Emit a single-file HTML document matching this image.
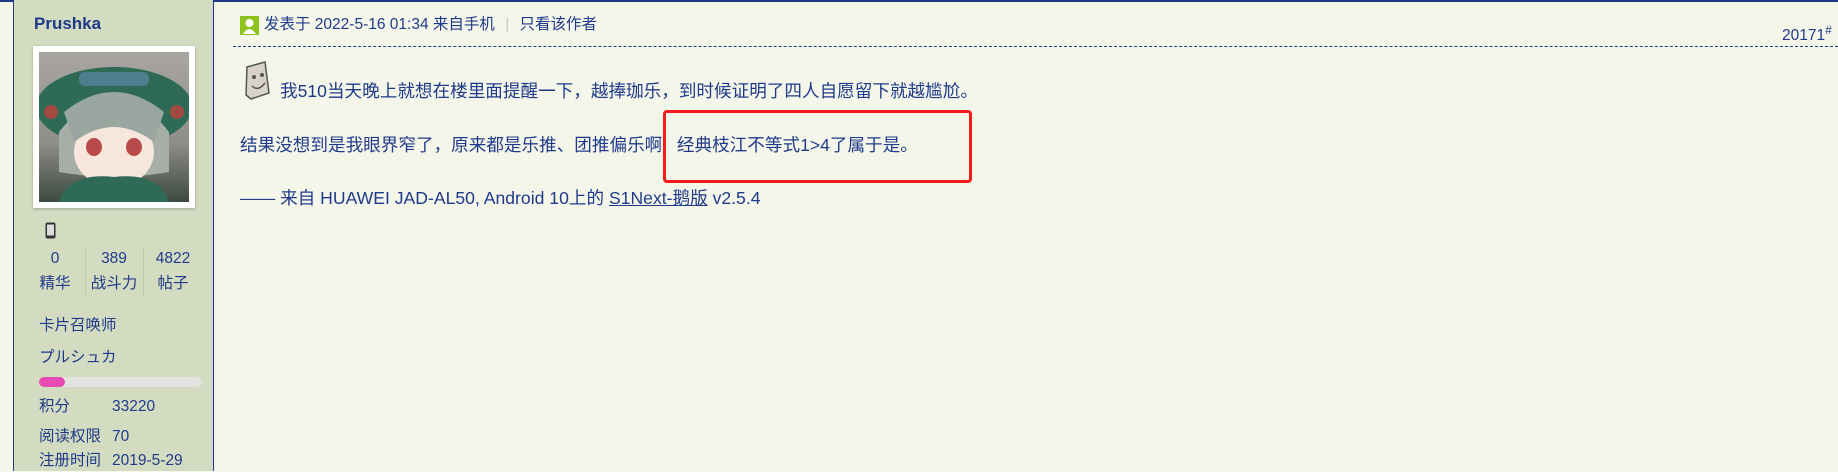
<!DOCTYPE html>
<html><head><meta charset="utf-8"><style>
*{margin:0;padding:0;box-sizing:border-box}
body{width:1838px;height:471px;overflow:hidden;background:#f5f6ea;font-family:"Liberation Sans","Noto Sans CJK SC",sans-serif;color:#1f3a8a;position:relative}
.top{position:absolute;left:0;top:0;width:1838px;height:2px;background:#1c3a86}
.side{position:absolute;left:13px;top:0;width:201px;height:471px;background:#d3dbc1;border-left:1px solid #1c3a86;border-right:1px solid #1c3a86}
.a{position:absolute;white-space:nowrap;line-height:22px}
.av{position:absolute;left:33px;top:46px;width:162px;height:162px;background:#fff;box-shadow:0 1px 3px rgba(0,0,0,.25)}
.avi{position:absolute;left:6px;top:6px;width:150px;height:150px;background:linear-gradient(#a9a6a2,#8f8e88 60%,#3d4a40);overflow:hidden}
.t{font-size:15.5px}
.stat{font-size:15.5px;text-align:center;width:56px}
</style></head><body>
<div class="top"></div>
<div class="side"></div>
<div class="a" style="left:34px;top:13px;font-size:17px;font-weight:bold;color:#1c3a86">Prushka</div>
<div class="av"><div class="avi">
<svg width="150" height="150" viewBox="0 0 150 150">
<ellipse cx="75" cy="55" rx="78" ry="40" fill="#2e6a56"/>
<rect x="40" y="20" width="70" height="14" rx="6" fill="#4f7f8e"/>
<path d="M20 80 Q75 10 130 80 L130 120 Q75 130 20 120Z" fill="#a7aea8"/>
<ellipse cx="75" cy="100" rx="40" ry="35" fill="#f6e6dc"/>
<path d="M25 60 Q75 20 125 60 L115 90 Q75 60 35 90Z" fill="#9aa6a0"/>
<ellipse cx="55" cy="95" rx="8" ry="9" fill="#b94a4a"/>
<ellipse cx="95" cy="95" rx="8" ry="9" fill="#b94a4a"/>
<path d="M20 150 Q30 120 75 125 Q120 120 130 150Z" fill="#2e6a56"/>
<circle cx="12" cy="60" r="7" fill="#a34a40"/><circle cx="138" cy="60" r="7" fill="#a34a40"/>
</svg></div></div>
<svg class="a" style="left:45px;top:222px" width="11" height="17" viewBox="0 0 11 17"><rect x=".5" y=".5" width="10" height="16" rx="2" fill="#333"/><rect x="2" y="2.5" width="7" height="11" fill="#ddd"/></svg>
<div class="a" style="left:85px;top:248px;width:1px;height:48px;background:#bfc8ad"></div>
<div class="a" style="left:143px;top:248px;width:1px;height:48px;background:#bfc8ad"></div>
<div class="a stat" style="left:27px;top:248px">0</div>
<div class="a stat" style="left:86px;top:248px">389</div>
<div class="a stat" style="left:145px;top:248px">4822</div>
<div class="a stat" style="left:27px;top:273px">精华</div>
<div class="a stat" style="left:86px;top:273px">战斗力</div>
<div class="a stat" style="left:145px;top:273px">帖子</div>
<div class="a t" style="left:39px;top:315px">卡片召唤师</div>
<div class="a t" style="left:39px;top:347px">プルシュカ</div>
<div class="a" style="left:39px;top:377px;width:163px;height:10px;border-radius:5px;background:#e2e2de"></div>
<div class="a" style="left:39px;top:377px;width:26px;height:10px;border-radius:5px;background:#e84cb4"></div>
<div class="a t" style="left:39px;top:396px">积分</div>
<div class="a t" style="left:112px;top:396px">33220</div>
<div class="a t" style="left:39px;top:426px">阅读权限</div>
<div class="a t" style="left:112px;top:426px">70</div>
<div class="a t" style="left:39px;top:450px">注册时间</div>
<div class="a t" style="left:112px;top:450px">2019-5-29</div>

<svg class="a" style="left:240px;top:16px" width="19" height="19" viewBox="0 0 19 19"><rect width="19" height="19" fill="#8dc21f"/><circle cx="9.5" cy="7" r="4" fill="#fff"/><path d="M3 18 Q9.5 8 16 18Z" fill="#fff"/></svg>
<div class="a" style="left:264px;top:14px;font-size:15.5px">发表于 2022-5-16 01:34 来自手机 <span style="color:#c8c8c8;margin:0 6px">|</span> 只看该作者</div>
<div class="a" style="left:1782px;top:19px;font-size:15.5px">20171<sup style="font-size:12px">#</sup></div>
<div class="a" style="left:233px;top:46px;width:1605px;border-top:1px dashed #1c3a86"></div>
<svg class="a" style="left:243px;top:61px" width="28" height="40" viewBox="0 0 28 40"><path d="M4 6 L22 1 L26 32 L8 38 L3 34Z" fill="#d8d2c8" stroke="#555" stroke-width="1.5"/><circle cx="11" cy="16" r="2" fill="#555"/><circle cx="19" cy="14" r="2" fill="#555"/><path d="M9 25 Q15 31 22 22" stroke="#555" fill="none" stroke-width="1.5"/></svg>
<div class="a" style="left:280px;top:80px;font-size:17.6px">我510当天晚上就想在楼里面提醒一下，越捧珈乐，到时候证明了四人自愿留下就越尴尬。</div>
<div class="a" style="left:240px;top:134px;font-size:17.6px">结果没想到是我眼界窄了，原来都是乐推、团推偏乐啊&nbsp;&nbsp;&nbsp;经典枝江不等式1&gt;4了属于是。</div>
<div class="a" style="left:663px;top:110px;width:309px;height:73px;border:3.5px solid #f31b1b;border-radius:4px"></div>
<div class="a" style="left:240px;top:187px;font-size:17.6px">—— 来自 HUAWEI JAD-AL50, Android 10上的 <u>S1Next-鹅版</u> v2.5.4</div>
</body></html>
